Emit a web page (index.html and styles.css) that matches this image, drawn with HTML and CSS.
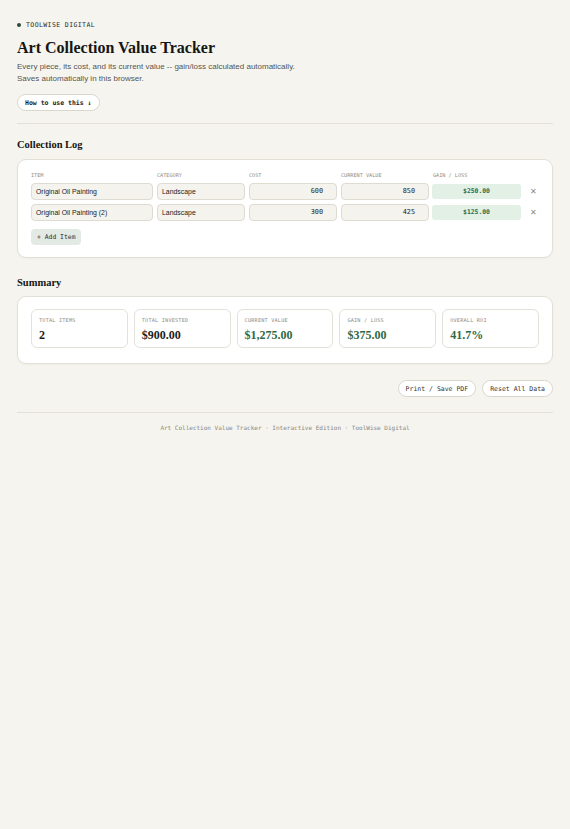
FILE: index.html
```html
<!DOCTYPE html>
<html lang="en">
<head>
<meta charset="utf-8">
<title>Art Collection Value Tracker</title>
<link rel="stylesheet" href="styles.css">
</head>
<body>
<div class="page">
  <header class="hero">
    <div class="brand"><span class="dot"></span>TOOLWISE DIGITAL</div>
    <h1 class="title">Art Collection Value Tracker</h1>
    <p class="lede">Every piece, its cost, and its current value -- gain/loss calculated automatically.<br>Saves automatically in this browser.</p>
    <button class="pill pill-bold">How to use this ↓</button>
  </header>

  <section class="section">
    <h2 class="section-title">Collection Log</h2>
    <div class="card log">
      <div class="grid head">
        <div>ITEM</div><div>CATEGORY</div><div>COST</div><div>CURRENT VALUE</div><div>GAIN / LOSS</div><div></div>
      </div>
      <div class="grid row">
        <div class="field">Original Oil Painting</div>
        <div class="field">Landscape</div>
        <div class="field num">600</div>
        <div class="field num">850</div>
        <div class="gain">$250.00</div>
        <div class="remove">✕</div>
      </div>
      <div class="grid row">
        <div class="field">Original Oil Painting (2)</div>
        <div class="field">Landscape</div>
        <div class="field num">300</div>
        <div class="field num">425</div>
        <div class="gain">$125.00</div>
        <div class="remove">✕</div>
      </div>
      <button class="add">+ Add Item</button>
    </div>
  </section>

  <section class="section section-gap">
    <h2 class="section-title">Summary</h2>
    <div class="card summary">
      <div class="stat"><div class="stat-label">TOTAL ITEMS</div><div class="stat-value">2</div></div>
      <div class="stat"><div class="stat-label">TOTAL INVESTED</div><div class="stat-value">$900.00</div></div>
      <div class="stat"><div class="stat-label">CURRENT VALUE</div><div class="stat-value green">$1,275.00</div></div>
      <div class="stat"><div class="stat-label">GAIN / LOSS</div><div class="stat-value green">$375.00</div></div>
      <div class="stat"><div class="stat-label">OVERALL ROI</div><div class="stat-value green">41.7%</div></div>
    </div>
  </section>

  <div class="actions">
    <button class="pill">Print / Save PDF</button>
    <button class="pill">Reset All Data</button>
  </div>

  <footer class="footer">Art Collection Value Tracker · Interactive Edition · ToolWise Digital</footer>
</div>
</body>
</html>
```
FILE: styles.css
```css
* { box-sizing: border-box; }
html, body { margin: 0; padding: 0; }
body {
  background: #f5f4ef;
  color: #1c1c1a;
  font-family: "Liberation Sans", Arial, sans-serif;
}
.page {
  padding: 20px 17px 20px 17px;
}
.brand {
  display: flex;
  align-items: center;
  gap: 5px;
  font-family: "DejaVu Sans Mono", monospace;
  font-size: 6.5px;
  letter-spacing: 0.4px;
  color: #2a2a28;
  height: 10px;
}
.dot {
  width: 4px; height: 4px; border-radius: 50%;
  background: #2f4a3a;
}
.title {
  font-family: "Liberation Serif", "Times New Roman", serif;
  font-weight: 700;
  font-size: 16px;
  line-height: 20px;
  margin: 8px 0 0 0;
  color: #161614;
}
.lede {
  font-size: 8px;
  line-height: 12px;
  color: #555550;
  margin: 3px 0 0 0;
}
.pill {
  font-family: "DejaVu Sans Mono", monospace;
  font-size: 6.5px;
  height: 17px;
  padding: 0 7px;
  border: 1px solid #d9d6cc;
  border-radius: 9px;
  background: #ffffff;
  color: #333331;
}
.pill-bold { font-weight: 700; color: #1c1c1a; margin-top: 9px; }
.hero {
  padding-bottom: 12px;
  border-bottom: 1px solid #e2e0d8;
}
.section-title {
  font-family: "Liberation Serif", "Times New Roman", serif;
  font-weight: 700;
  font-size: 10.5px;
  line-height: 14px;
  margin: 14px 0 7px 0;
  color: #161614;
}
.section-gap .section-title { margin-top: 18px; margin-bottom: 6px; }
.card {
  background: #ffffff;
  border: 1.5px solid #e2dfd5;
  border-radius: 9px;
  box-shadow: 0 1px 2px rgba(0,0,0,0.03);
}
.log { padding: 11px 13px 12px 13px; }
.grid {
  display: grid;
  grid-template-columns: 122px 88px 88px 88px 88px 1fr;
  column-gap: 4px;
  align-items: center;
}
.head {
  font-family: "DejaVu Sans Mono", monospace;
  font-size: 5.2px;
  color: #8e8c86;
  height: 8px;
  margin-bottom: 4px;
}
.row { margin-bottom: 4px; }
.field {
  height: 17px;
  border: 1px solid #dedbd1;
  border-radius: 4px;
  background: #f4f3ee;
  font-size: 6.9px;
  line-height: 15px;
  padding: 0 4px;
  color: #222220;
}
.field.num {
  font-family: "DejaVu Sans Mono", monospace;
  font-size: 6.8px;
  text-align: right;
  padding-right: 13px;
}
.gain {
  height: 15px;
  margin-left: -1px;
  border-radius: 3px;
  background: #e2f0e6;
  color: #2f6b48;
  font-family: "DejaVu Sans Mono", monospace;
  font-weight: 700;
  font-size: 6.4px;
  line-height: 15px;
  text-align: center;
}
.remove {
  color: #8c8a84;
  font-size: 8px;
  text-align: center;
  padding-left: 2px;
}
.add {
  margin-top: 4px;
  height: 16px;
  padding: 0 6px;
  border: 0;
  border-radius: 4px;
  background: #e3eae5;
  font-family: "DejaVu Sans Mono", monospace;
  font-size: 6.4px;
  color: #2c2c2a;
}
.summary {
  padding: 12px 13px 15px 13px;
  display: grid;
  grid-template-columns: repeat(5, 1fr);
  gap: 6px;
}
.stat {
  height: 39px;
  border: 1px solid #e4e1d8;
  border-radius: 6px;
  padding: 7px 7px;
}
.stat-label {
  font-family: "DejaVu Sans Mono", monospace;
  font-size: 5.2px;
  letter-spacing: 0.2px;
  color: #8e8c86;
  line-height: 7px;
}
.stat-value {
  font-family: "Liberation Serif", "Times New Roman", serif;
  font-weight: 700;
  font-size: 12px;
  line-height: 14px;
  margin-top: 4px;
  color: #1c1c1a;
}
.stat-value.green { color: #2e6a46; }
.actions {
  display: flex;
  justify-content: flex-end;
  gap: 6px;
  margin-top: 16px;
  padding-bottom: 15px;
  border-bottom: 1px solid #e2e0d8;
}
.footer {
  font-family: "DejaVu Sans Mono", monospace;
  font-size: 6px;
  color: #8a8882;
  text-align: center;
  margin-top: 10px;
  line-height: 9px;
}
```
